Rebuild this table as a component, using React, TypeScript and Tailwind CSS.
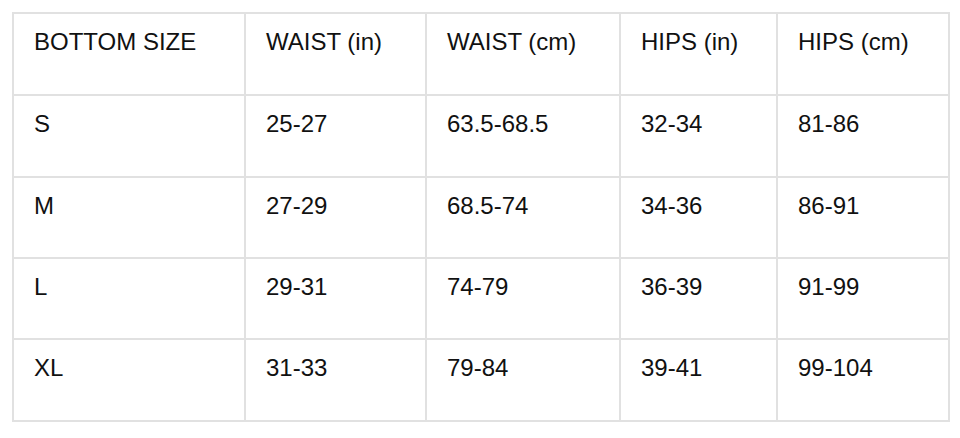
const headers = ["BOTTOM SIZE", "WAIST (in)", "WAIST (cm)", "HIPS (in)", "HIPS (cm)"];

const rows = [
  ["S", "25-27", "63.5-68.5", "32-34", "81-86"],
  ["M", "27-29", "68.5-74", "34-36", "86-91"],
  ["L", "29-31", "74-79", "36-39", "91-99"],
  ["XL", "31-33", "79-84", "39-41", "99-104"],
];

export default function App() {
  const cells = [headers, ...rows];
  return (
    <div className="min-h-screen bg-white pl-[12px] pt-[12px] font-['Liberation_Sans',Arial,sans-serif]">
      {/* Size chart grid, gaps show as grid lines */}
      <div className="grid w-[938px] grid-cols-[230px_179px_192px_155px_170px] grid-rows-[80px_80px_79px_79px_80px] gap-[2px] bg-[#e1e1e1] p-[2px]">
        {cells.map((row, i) =>
          row.map((cell, j) => (
            <div
              key={`${i}-${j}`}
              className="bg-white px-[20px] pt-[14px] text-[24px] leading-[28px] text-[#111]"
            >
              {cell}
            </div>
          ))
        )}
      </div>
    </div>
  );
}
